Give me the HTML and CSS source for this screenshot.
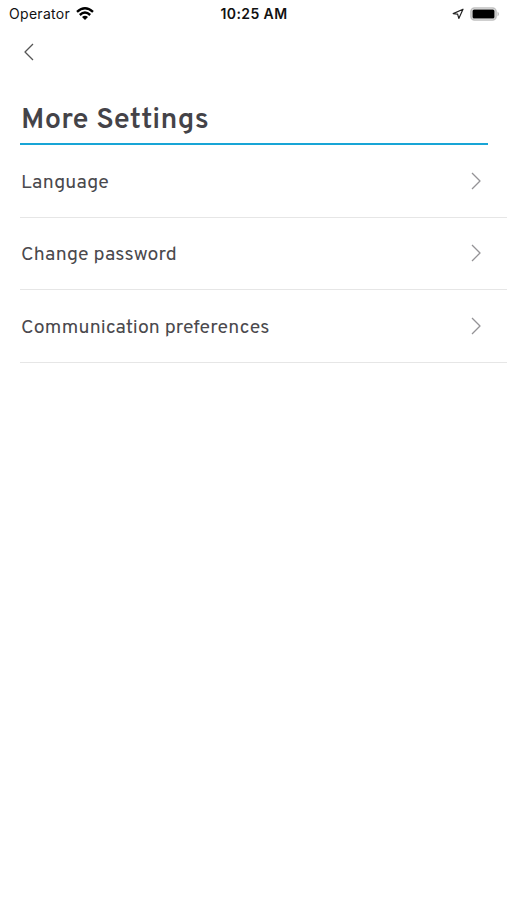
FILE: index.html
```
<!DOCTYPE html>
<html lang="en">
<head>
    <meta charset="UTF-8">
    <title>More Settings</title>
    <link rel="stylesheet" href="styles.css">
</head>
<body>
    <div class="status-bar">
        <div class="carrier">
            <span class="carrier-name">Operator</span>
            <svg class="wifi" viewBox="0 0 18 14" width="18" height="14">
                <path d="M1 4.8 Q9 -2.2 17 4.8" />
                <path d="M3.8 8 Q9 3.2 14.2 8" />
                <path class="dot" d="M6 10 Q9 7.6 12 10 L9 13 Z" />
            </svg>
        </div>
        <span class="time">10:25 AM</span>
        <div class="indicators">
            <svg class="location" viewBox="0 0 12 12" width="12" height="12">
                <path d="M11 1.2 L1.2 5.6 L5.6 6.2 L6.8 10.4 Z" />
            </svg>
            <svg class="battery" viewBox="0 0 30 14" width="30" height="14">
                <rect class="shell" x="1" y="1" width="25" height="12" rx="3.5" />
                <rect class="charge" x="2.5" y="2.5" width="22" height="9" rx="1.5" />
                <path class="tip" d="M27.5 4.5 Q30.5 7 27.5 9.5 Z" />
            </svg>
        </div>
    </div>

    <div class="nav">
        <a href="#" class="back">
            <svg class="chevron" viewBox="0 0 10 18" width="10" height="18">
                <path d="M9 1 L1 9 L9 17" />
            </svg>
        </a>
    </div>

    <h1>More Settings</h1>

    <ul class="settings">
        <li>
            <span>Language</span>
            <svg class="chevron" viewBox="0 0 10 18" width="10" height="18"><path d="M1 1 L9 9 L1 17" /></svg>
        </li>
        <li>
            <span>Change password</span>
            <svg class="chevron" viewBox="0 0 10 18" width="10" height="18"><path d="M1 1 L9 9 L1 17" /></svg>
        </li>
        <li>
            <span>Communication preferences</span>
            <svg class="chevron" viewBox="0 0 10 18" width="10" height="18"><path d="M1 1 L9 9 L1 17" /></svg>
        </li>
    </ul>
</body>
</html>
```

FILE: styles.css
```
* {
    box-sizing: border-box;
}

body {
    margin: 0;
    background-color: #fff;
    color: #444348;
    font-family: Overpass, "Open Sans", sans-serif;
}

svg {
    display: block;
    fill: none;
    stroke-linejoin: round;
}

.status-bar {
    display: grid;
    grid-template-columns: 1fr auto 1fr;
    align-items: center;
    height: 27px;
    padding: 0 7px 0 9px;
    color: #111;
    font-family: Inter, sans-serif;
    font-size: 14px;
}

.carrier {
    display: flex;
    align-items: center;
    gap: 6px;
}

.carrier-name {
    letter-spacing: 0.3px;
}

.wifi {
    stroke: #000;
    stroke-width: 2.4;
}

.wifi .dot {
    fill: #000;
    stroke: none;
}

.time {
    margin-right: 1px;
    font-weight: 600;
    letter-spacing: 0.4px;
}

.indicators {
    display: flex;
    align-items: center;
    justify-content: flex-end;
    gap: 6px;
}

.location {
    stroke: #222;
    stroke-width: 1.2;
}

.shell {
    stroke: #c0c0c0;
    stroke-width: 1.7;
}

.charge {
    fill: #000;
}

.tip {
    fill: #bbb;
}

.nav {
    height: 73px;
    padding: 16px 24px;
}

.back {
    display: block;
    width: 10px;
}

.chevron {
    stroke: #949396;
    stroke-width: 1.3;
}

.back .chevron {
    stroke: #555;
}

h1 {
    height: 45px;
    margin: 0 19px 0 20px;
    padding: 2px 0 0 1px;
    border-bottom: 2px solid #18a5d6;
    font-size: 29px;
    font-weight: 600;
    line-height: 37px;
    letter-spacing: 0.3px;
}

.settings {
    margin: 0 0 0 20px;
    padding: 0;
    list-style: none;
}

.settings li {
    display: flex;
    align-items: center;
    justify-content: space-between;
    height: 72.5px;
    padding-right: 26px;
    border-bottom: 1px solid #e6e6e6;
    color: #4a494d;
    font-size: 19.5px;
    letter-spacing: 0.15px;
}

.settings span {
    padding: 4px 0 0 1px;
}
```
